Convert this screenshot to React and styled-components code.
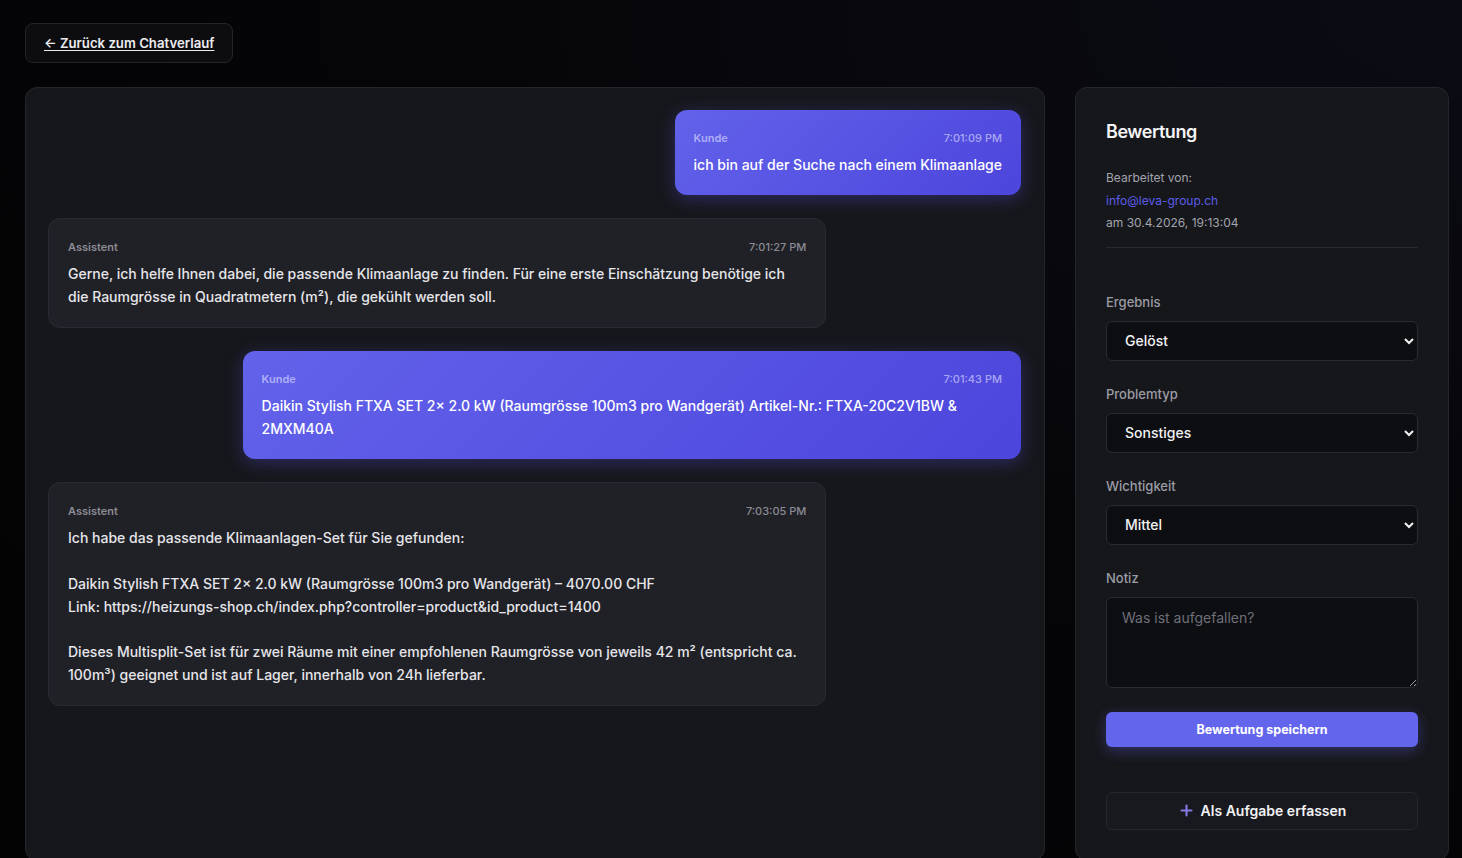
import React from 'react';
import styled, { createGlobalStyle } from 'styled-components';
import { Plus } from 'lucide-react';

const GlobalStyle = createGlobalStyle`
  html, body {
    margin: 0;
    height: 100%;
    overflow: hidden;
    background: radial-gradient(ellipse at 100% 0%, #0b0b14 0%, #050507 55%, #030304 100%);
    color: #e8e8ec;
    font-family: Inter, "Noto Sans", "Liberation Sans", sans-serif;
    color-scheme: dark;
  }
`;

const Page = styled.div`
  padding: 23px 13px 0 25px;
`;

const BackLink = styled.a`
  display: inline-flex;
  align-items: center;
  height: 40px;
  box-sizing: border-box;
  padding: 0 18px;
  border: 1px solid #24252b;
  border-radius: 8px;
  background: #0d0d10;
  color: #ececef;
  font-size: 13.2px;
  font-weight: 600;
  text-decoration: underline;
  text-underline-offset: 2px;
  cursor: pointer;
`;

const Layout = styled.div`
  display: grid;
  grid-template-columns: 1020px 374px;
  gap: 30px;
  margin-top: 24px;
`;

const Panel = styled.section`
  background: #16171b;
  border: 1px solid #25262c;
  border-radius: 12px;
  box-sizing: border-box;
`;

const ChatPanel = styled(Panel)`
  padding: 22px 23px 22px 22px;
  display: flex;
  flex-direction: column;
  gap: 23.5px;
`;

const Bubble = styled.div`
  max-width: 80%;
  box-sizing: border-box;
  align-self: ${(p) => (p.$customer ? 'flex-end' : 'flex-start')};
  padding: 20px 19px 18px;
  border-radius: 12px;
  border: ${(p) => (p.$customer ? 'none' : '1px solid #2a2b32')};
  background: ${(p) =>
    p.$customer
      ? 'linear-gradient(135deg, #6262ea 0%, #5551e2 60%, #4d45dc 100%)'
      : '#202127'};
  box-shadow: ${(p) =>
    p.$customer ? '0 4px 18px rgba(88, 80, 230, 0.35)' : 'none'};
`;

const BubbleHead = styled.div`
  display: flex;
  justify-content: space-between;
  align-items: center;
  gap: 24px;
  font-size: 11px;
  line-height: 16px;
  margin-bottom: 8px;
  color: ${(p) => (p.$customer ? 'rgba(225, 225, 255, 0.62)' : '#8a8b93')};
`;

const Author = styled.span`
  font-weight: 600;
`;

const Time = styled.span`
  font-weight: 500;
`;

const BubbleText = styled.div`
  font-size: 14px;
  line-height: 1.625;
  font-weight: 500;
  white-space: pre-wrap;
  color: ${(p) => (p.$customer ? '#ffffff' : '#e6e6ea')};
`;

const SidePanel = styled(Panel)`
  padding: 30px;
  display: flex;
  flex-direction: column;
`;

const Title = styled.h2`
  margin: 0 0 21px;
  font-size: 18px;
  line-height: 28px;
  font-weight: 600;
  letter-spacing: -0.025em;
  color: #f4f4f6;
`;

const Meta = styled.div`
  font-size: 12px;
  line-height: 22.5px;
  color: #a3a4ad;
  padding-bottom: 12px;
  border-bottom: 1px solid #2a2b31;
  margin-bottom: 45px;
`;

const Email = styled.div`
  color: #5b5de9;
`;

const Field = styled.div`
  margin-bottom: 24px;
`;

const Label = styled.label`
  display: block;
  font-size: 13px;
  line-height: 18px;
  font-weight: 500;
  color: #9b9ca6;
  margin-bottom: 10px;
`;

const Select = styled.select`
  width: 100%;
  height: 40px;
  box-sizing: border-box;
  padding: 0 14px;
  background: #0d0e12;
  border: 1px solid #2a2b31;
  border-radius: 6px;
  color: #f2f2f4;
  font-family: inherit;
  font-size: 14px;
  font-weight: 500;
  color-scheme: dark;
`;

const TextArea = styled.textarea`
  display: block;
  width: 100%;
  height: 91px;
  box-sizing: border-box;
  padding: 10px 15px;
  background: #0d0e12;
  border: 1px solid #2a2b31;
  border-radius: 6px;
  color: #f2f2f4;
  font-family: inherit;
  font-size: 14px;
  line-height: 20px;
  resize: vertical;
  color-scheme: dark;
  &::placeholder {
    color: #6e6f78;
  }
`;

const SaveButton = styled.button`
  height: 35px;
  border: none;
  border-radius: 6px;
  background: #6366ec;
  color: #ffffff;
  font-family: inherit;
  font-size: 12.5px;
  font-weight: 700;
  box-shadow: 0 4px 14px rgba(99, 102, 241, 0.35);
  cursor: pointer;
`;

const TaskButton = styled.button`
  display: flex;
  align-items: center;
  justify-content: center;
  gap: 6px;
  height: 38px;
  margin-top: 45px;
  border: 1px solid #26272d;
  border-radius: 6px;
  background: #18191e;
  color: #f2f2f4;
  font-family: inherit;
  font-size: 14px;
  font-weight: 600;
  cursor: pointer;
  svg {
    color: #8479e4;
  }
`;

const messages = [
  {
    customer: true,
    author: 'Kunde',
    time: '7:01:09 PM',
    text: 'ich bin auf der Suche nach einem Klimaanlage',
  },
  {
    customer: false,
    author: 'Assistent',
    time: '7:01:27 PM',
    text: 'Gerne, ich helfe Ihnen dabei, die passende Klimaanlage zu finden. Für eine erste Einschätzung benötige ich die Raumgrösse in Quadratmetern (m²), die gekühlt werden soll.',
  },
  {
    customer: true,
    author: 'Kunde',
    time: '7:01:43 PM',
    text: 'Daikin Stylish FTXA SET 2× 2.0 kW (Raumgrösse 100m3 pro Wandgerät) Artikel-Nr.: FTXA-20C2V1BW & 2MXM40A',
  },
  {
    customer: false,
    author: 'Assistent',
    time: '7:03:05 PM',
    text: 'Ich habe das passende Klimaanlagen-Set für Sie gefunden:\n\nDaikin Stylish FTXA SET 2× 2.0 kW (Raumgrösse 100m3 pro Wandgerät) – 4070.00 CHF\nLink: https://heizungs-shop.ch/index.php?controller=product&id_product=1400\n\nDieses Multisplit-Set ist für zwei Räume mit einer empfohlenen Raumgrösse von jeweils 42 m² (entspricht ca. 100m³) geeignet und ist auf Lager, innerhalb von 24h lieferbar.',
  },
];

const App = () => (
  <Page>
    <GlobalStyle />
    <BackLink>← Zurück zum Chatverlauf</BackLink>
    <Layout>
      <ChatPanel>
        {messages.map((m, i) => (
          <Bubble key={i} $customer={m.customer}>
            <BubbleHead $customer={m.customer}>
              <Author>{m.author}</Author>
              <Time>{m.time}</Time>
            </BubbleHead>
            <BubbleText $customer={m.customer}>{m.text}</BubbleText>
          </Bubble>
        ))}
      </ChatPanel>
      <SidePanel>
        <Title>Bewertung</Title>
        <Meta>
          <div>Bearbeitet von:</div>
          <Email>info@leva-group.ch</Email>
          <div>am 30.4.2026, 19:13:04</div>
        </Meta>
        <Field>
          <Label>Ergebnis</Label>
          <Select defaultValue="geloest">
            <option value="geloest">Gelöst</option>
            <option value="offen">Offen</option>
          </Select>
        </Field>
        <Field>
          <Label>Problemtyp</Label>
          <Select defaultValue="sonstiges">
            <option value="sonstiges">Sonstiges</option>
          </Select>
        </Field>
        <Field>
          <Label>Wichtigkeit</Label>
          <Select defaultValue="mittel">
            <option value="mittel">Mittel</option>
          </Select>
        </Field>
        <Field>
          <Label>Notiz</Label>
          <TextArea placeholder="Was ist aufgefallen?" />
        </Field>
        <SaveButton>Bewertung speichern</SaveButton>
        <TaskButton>
          <Plus size={17} strokeWidth={3} />
          Als Aufgabe erfassen
        </TaskButton>
      </SidePanel>
    </Layout>
  </Page>
);

export default App;
